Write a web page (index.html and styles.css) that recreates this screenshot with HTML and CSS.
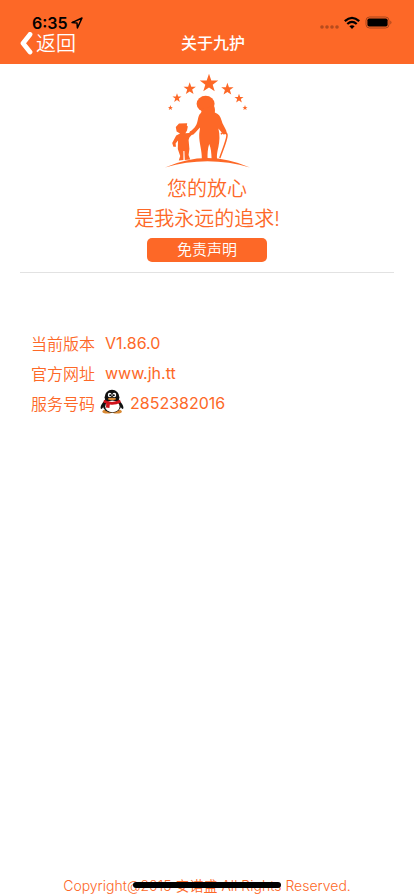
FILE: index.html
```html
<!DOCTYPE html>
<html lang="zh">
<head>
    <meta charset="UTF-8">
    <meta name="viewport" content="width=device-width, initial-scale=1.0">
    <title>关于九护</title>
    <link rel="stylesheet" href="styles.css">
</head>
<body>
<header class="top">
    <div class="status">
        <div class="status-left">
            <span class="time">6:35</span>
            <svg width="12" height="12" viewBox="0 0 12 12"><path d="M1 5.6 L11 1 L6.4 11 L6 6 Z" fill="none" stroke="#000" stroke-width="1.5" stroke-linejoin="round"/></svg>
        </div>
        <div class="status-right">
            <svg width="20" height="14" viewBox="0 0 20 14" fill="#b64b1d"><circle cx="3" cy="11" r="1.8"/><circle cx="8" cy="11" r="1.8"/><circle cx="13" cy="11" r="1.8"/><circle cx="18" cy="11" r="1.8"/></svg>
            <svg width="16" height="14" viewBox="0 0 16 14"><path d="M.8 5.2 Q8 -1.4 15.2 5.2 M3.3 8 Q8 3.8 12.7 8" fill="none" stroke="#000" stroke-width="2.3"/><path d="M5.4 10.3 Q8 8.1 10.6 10.3 L8 13 Z"/></svg>
            <svg width="27" height="14" viewBox="0 0 27 14"><rect x="1" y="1" width="23" height="11" rx="3.5" fill="none" stroke="#a8441a"/><rect x="2.4" y="2.4" width="20.2" height="8.2" rx="1.8"/><path d="M25.3 4.6 Q27.6 6.5 25.3 8.4 Z" fill="#a8441a"/></svg>
        </div>
    </div>
    <nav class="nav">
        <a class="back" href="#">
            <svg width="14" height="24" viewBox="0 0 14 24"><path d="M10 2.4 L3 11.2 L10 20" fill="none" stroke="#fff" stroke-width="4.8" stroke-linecap="round" stroke-linejoin="round"/></svg>
            <span>返回</span>
        </a>
        <h1 class="title">关于九护</h1>
    </nav>
</header>

<main class="main">
    <section class="brand">
        <svg class="logo" width="90" height="96" viewBox="0 0 90 96">
            <defs>
                <path id="star" d="M0 -10 L2.4 -3.2 L9.5 -3.1 L3.8 1.2 L5.9 8.1 L0 4 L-5.9 8.1 L-3.8 1.2 L-9.5 -3.1 L-2.4 -3.2 Z"/>
            </defs>
            <g fill="#fd6827">
                <use href="#star" transform="translate(47 10.5) scale(.97)"/>
                <use href="#star" transform="translate(27.7 15.8) scale(.65)"/>
                <use href="#star" transform="translate(65.4 16.3) scale(.65)"/>
                <use href="#star" transform="translate(15 25) scale(.48)"/>
                <use href="#star" transform="translate(77 25.5) scale(.48)"/>
                <use href="#star" transform="translate(8.4 34.8) scale(.27)"/>
                <use href="#star" transform="translate(83 34.8) scale(.27)"/>
                <!-- 老人 -->
                <ellipse cx="43.6" cy="30.8" rx="9" ry="8"/>
                <path d="M38.6 36 L52 33 C53 35 53.2 37.6 52.8 39.4 C56.6 40.6 58.4 43 59.4 47 C60.4 51.6 63.4 55 64.4 58 L64.6 61 L61.4 61.4 L56.4 55.4 C58 62 57.6 68 56.4 74 C55.4 78 54.6 82 55 86 L49.6 86 C49.4 80 49 75 47.2 71 C45.6 76 45.4 81 45.6 86 L39.8 86 C40.2 78 37 70 37.2 62 C37.2 59 38 57 38 54.4 C35.6 57 34 59 31.4 61.6 L27.4 62.4 L27.8 58.6 C30.4 57 32 55.4 33.6 53 C36.4 49 35.4 43 38.4 40.4 C39.6 39.4 40 38 38.6 36 Z"/>
                <!-- 小孩 -->
                <path d="M13.8 54 L17 50.4 L25.2 50.2 L24.8 52.6 L25.8 53.6 L25 57.4 L23.4 60.2 L27 60 L30 57.8 L31 60.4 L27.4 64.4 L26.6 67 L27.4 76 L26.6 82 L28.2 86.6 L22.8 87 L22.4 78 L21.4 78 L21.4 87 L16.8 87.4 L18.2 83 L15.8 76 L16 67.6 L13.6 70.6 L14 73.8 L11.4 73.8 L10.2 70 L14.2 62.4 L18 60.4 L14.6 58.4 Z"/>
                <path d="M3 94.5 Q45.5 75.4 88 94.5 Q45.5 82 3 94.5 Z"/>
            </g>
            <path d="M59 61.2 C61 58.4 65.2 59 65 62.6 C64.8 67 61 76 57.8 85" fill="none" stroke="#fd6827" stroke-width="1.5"/>
        </svg>
        <div class="slogan">
            <p>您的放心</p>
            <p>是我永远的追求!</p>
        </div>
        <button class="btn" type="button">免责声明</button>
    </section>

    <dl class="info">
        <div class="info-row">
            <dt>当前版本</dt>
            <dd>V1.86.0</dd>
        </div>
        <div class="info-row">
            <dt>官方网址</dt>
            <dd>www.jh.tt</dd>
        </div>
        <div class="info-row qq">
            <dt>服务号码</dt>
            <dd>
                <svg width="24" height="28" viewBox="0 0 24 28">
                    <path d="M4.5 12 C1.8 14.2 -.2 18 .9 19.8 C1.8 20.4 3 18.6 3.8 17 Z M19.5 12 C22.2 14.2 24.2 18 23.1 19.8 C22.2 20.4 21 18.6 20.2 17 Z" fill="#111"/>
                    <ellipse cx="7.4" cy="22.6" rx="5" ry="2" fill="#d98a35"/>
                    <ellipse cx="16.8" cy="22.6" rx="5" ry="2" fill="#d98a35"/>
                    <ellipse cx="12" cy="16.2" rx="9.2" ry="7.6" fill="#111"/>
                    <ellipse cx="12" cy="8.2" rx="7.4" ry="7.4" fill="#111"/>
                    <ellipse cx="12.4" cy="17.4" rx="7.2" ry="5.8" fill="#fff"/>
                    <ellipse cx="9.7" cy="6" rx="1.9" ry="2.3" fill="#fff"/>
                    <ellipse cx="14.3" cy="6" rx="1.9" ry="2.3" fill="#fff"/>
                    <circle cx="10.2" cy="6.3" r="1"/>
                    <circle cx="13.8" cy="6.3" r="1"/>
                    <ellipse cx="12" cy="9.9" rx="4" ry="1.1" fill="#d98a35"/>
                    <path d="M4 10.8 Q12 15 20 10.8 L20.8 13.4 Q15 16.4 9.8 15.4 L9.4 19 L6 18.4 L6.2 14.6 L3.4 13.4 Z" fill="#d0121c"/>
                </svg>
                <span>2852382016</span>
            </dd>
        </div>
    </dl>
</main>

<footer class="footer">Copyright@2015 安诺盛 All Rights Reserved.</footer>
<div class="home-bar"></div>
</body>
</html>
```

FILE: styles.css
```css
* { box-sizing: border-box; }
body {
    margin: 0;
    min-height: 100vh;
    display: flex;
    flex-direction: column;
    background: #fff;
    color: #fd6827;
    font-family: Inter, "Noto Sans CJK SC", sans-serif;
    font-size: 16px;
    font-weight: 350;
}
h1, p, dl, dd { margin: 0; }

.top { background: #fd6827; color: #fff; padding-top: 14px; }
.status { display: flex; justify-content: space-between; align-items: center; height: 18px; padding: 0 22px 0 32px; color: #000; }
.status-left { display: flex; align-items: center; gap: 3px; }
.status-right { display: flex; align-items: center; gap: 5px; }
.time { font-weight: 600; line-height: 18px; }

.nav { display: grid; grid-template-columns: 1fr auto 1fr; align-items: center; height: 32px; padding: 0 20px 12px; }
.back { display: flex; align-items: center; gap: 2px; color: #fff; text-decoration: none; font-size: 20px; line-height: 24px; }
.title { padding: 0 0 2px 12px; font-size: 16px; line-height: 18px; font-weight: 500; }

.main { flex: 1; padding: 9px 20px; }
.brand { display: flex; flex-direction: column; align-items: center; padding-bottom: 10px; border-bottom: 1px solid #e2e2e2; }
.slogan { margin: 5px 0 4px; font-size: 20px; line-height: 30px; text-align: center; }
.btn {
    width: 120px;
    height: 24px;
    padding: 0;
    border: none;
    border-radius: 5px;
    background: #fd6827;
    color: #fff;
    font-family: inherit;
    font-size: 15px;
    line-height: 24px;
    font-weight: inherit;
    cursor: pointer;
}

.info { margin-top: 55px; padding-left: 11px; }
.info-row { display: flex; align-items: center; gap: 10px; height: 30px; }
.info-row.qq { gap: 5px; }
.info-row dd { display: flex; align-items: center; gap: 6px; font-weight: 400; }

.footer { text-align: center; font-size: 14px; line-height: 20px; }
.home-bar {
    position: absolute;
    left: 50%;
    bottom: 8px;
    width: 148px;
    height: 6px;
    border-radius: 3px;
    background: #000;
    transform: translateX(-50%);
}
```
